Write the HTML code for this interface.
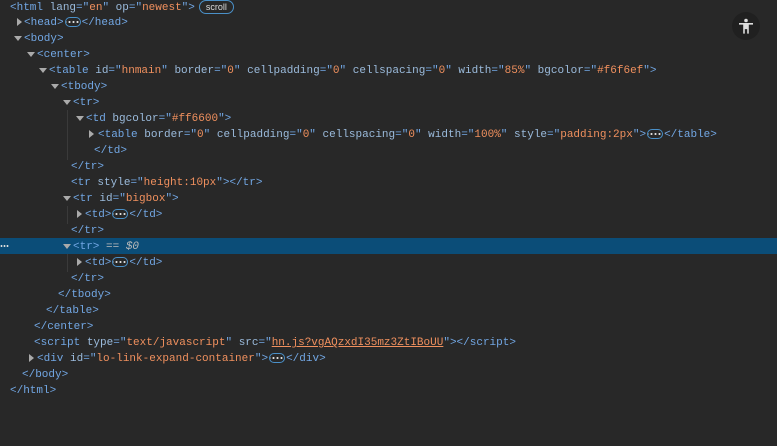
<!DOCTYPE html><html><head><style>
body{margin:0;width:777px;height:446px;background:#282828;font-family:"Liberation Mono",monospace;font-size:11px;color:#d6d6d6;overflow:hidden;position:relative}
.r{position:absolute;left:0;width:777px;height:16px;line-height:18px;white-space:pre}
.sel{background:#0b4d78}
.t{color:#72a7e4}.a{color:#9bbbdc}.v{color:#f0905e}.u{color:#f0905e;text-decoration:underline}
.ar{position:absolute;width:0;height:0}
.dn{border-left:4px solid transparent;border-right:4px solid transparent;border-top:5px solid #aaa;margin-top:6px}
.rt{border-top:4px solid transparent;border-bottom:4px solid transparent;border-left:5px solid #aaa;margin-top:4px}
.el{display:inline-block;border:1px solid #4a90c8;border-radius:7px;height:10px;width:16px;vertical-align:middle;margin:0 1px;box-sizing:border-box;background:radial-gradient(circle,#ddd 0.9px,transparent 1.2px) 1.5px 0/4px 8px repeat-x}
.sc{display:inline-block;border:1px solid #4a90c8;border-radius:8px;height:12px;line-height:12px;padding:0 6px;font-size:9px;color:#ddd;vertical-align:middle;font-family:"Liberation Sans",sans-serif;margin-left:4px}
.ln{position:absolute;width:1px;background:#3a3a3a}
</style></head><body>
<div class="ln" style="left:67px;top:110px;height:50px"></div>
<div class="ln" style="left:67px;top:206px;height:18px"></div>
<div class="ln" style="left:67px;top:254px;height:18px"></div>
<div class="r" style="top:-1px"><span style="position:absolute;left:10px"><span class="t">&lt;html</span> <span class="a">lang</span><span class="t">="</span><span class="v">en</span><span class="t">"</span> <span class="a">op</span><span class="t">="</span><span class="v">newest</span><span class="t">"&gt;</span><span class="sc">scroll</span></span></div>
<div class="r" style="top:14px"><i class="ar rt" style="left:17px"></i><span style="position:absolute;left:24px"><span class="t">&lt;head&gt;</span><span class="el"></span><span class="t">&lt;/head&gt;</span></span></div>
<div class="r" style="top:30px"><i class="ar dn" style="left:14px"></i><span style="position:absolute;left:24px" class="t">&lt;body&gt;</span></div>
<div class="r" style="top:46px"><i class="ar dn" style="left:27px"></i><span style="position:absolute;left:37px" class="t">&lt;center&gt;</span></div>
<div class="r" style="top:62px"><i class="ar dn" style="left:39px"></i><span style="position:absolute;left:49px"><span class="t">&lt;table</span> <span class="a">id</span><span class="t">="</span><span class="v">hnmain</span><span class="t">"</span> <span class="a">border</span><span class="t">="</span><span class="v">0</span><span class="t">"</span> <span class="a">cellpadding</span><span class="t">="</span><span class="v">0</span><span class="t">"</span> <span class="a">cellspacing</span><span class="t">="</span><span class="v">0</span><span class="t">"</span> <span class="a">width</span><span class="t">="</span><span class="v">85%</span><span class="t">"</span> <span class="a">bgcolor</span><span class="t">="</span><span class="v">#f6f6ef</span><span class="t">"&gt;</span></span></div>
<div class="r" style="top:78px"><i class="ar dn" style="left:51px"></i><span style="position:absolute;left:61px" class="t">&lt;tbody&gt;</span></div>
<div class="r" style="top:94px"><i class="ar dn" style="left:63px"></i><span style="position:absolute;left:73px" class="t">&lt;tr&gt;</span></div>
<div class="r" style="top:110px"><i class="ar dn" style="left:76px"></i><span style="position:absolute;left:86px"><span class="t">&lt;td</span> <span class="a">bgcolor</span><span class="t">="</span><span class="v">#ff6600</span><span class="t">"&gt;</span></span></div>
<div class="r" style="top:126px"><i class="ar rt" style="left:89px"></i><span style="position:absolute;left:98px"><span class="t">&lt;table</span> <span class="a">border</span><span class="t">="</span><span class="v">0</span><span class="t">"</span> <span class="a">cellpadding</span><span class="t">="</span><span class="v">0</span><span class="t">"</span> <span class="a">cellspacing</span><span class="t">="</span><span class="v">0</span><span class="t">"</span> <span class="a">width</span><span class="t">="</span><span class="v">100%</span><span class="t">"</span> <span class="a">style</span><span class="t">="</span><span class="v">padding:2px</span><span class="t">"&gt;</span><span class="el"></span><span class="t">&lt;/table&gt;</span></span></div>
<div class="r" style="top:142px"><span style="position:absolute;left:94px" class="t">&lt;/td&gt;</span></div>
<div class="r" style="top:158px"><span style="position:absolute;left:71px" class="t">&lt;/tr&gt;</span></div>
<div class="r" style="top:174px"><span style="position:absolute;left:71px"><span class="t">&lt;tr</span> <span class="a">style</span><span class="t">="</span><span class="v">height:10px</span><span class="t">"&gt;&lt;/tr&gt;</span></span></div>
<div class="r" style="top:190px"><i class="ar dn" style="left:63px"></i><span style="position:absolute;left:73px"><span class="t">&lt;tr</span> <span class="a">id</span><span class="t">="</span><span class="v">bigbox</span><span class="t">"&gt;</span></span></div>
<div class="r" style="top:206px"><i class="ar rt" style="left:77px"></i><span style="position:absolute;left:85px"><span class="t">&lt;td&gt;</span><span class="el"></span><span class="t">&lt;/td&gt;</span></span></div>
<div class="r" style="top:222px"><span style="position:absolute;left:71px" class="t">&lt;/tr&gt;</span></div>
<div class="r sel" style="top:238px"><span style="position:absolute;left:0;top:7px;width:9px;height:2px;background:radial-gradient(circle,#ddd 0.8px,transparent 1.1px) 0 0/3px 2px repeat-x"></span><i class="ar dn" style="left:63px"></i><span style="position:absolute;left:73px"><span class="t">&lt;tr&gt;</span> <span style="color:#bbb">== <i>$0</i></span></span></div>
<div class="r" style="top:254px"><i class="ar rt" style="left:77px"></i><span style="position:absolute;left:85px"><span class="t">&lt;td&gt;</span><span class="el"></span><span class="t">&lt;/td&gt;</span></span></div>
<div class="r" style="top:270px"><span style="position:absolute;left:71px" class="t">&lt;/tr&gt;</span></div>
<div class="r" style="top:286px"><span style="position:absolute;left:58px" class="t">&lt;/tbody&gt;</span></div>
<div class="r" style="top:302px"><span style="position:absolute;left:46px" class="t">&lt;/table&gt;</span></div>
<div class="r" style="top:318px"><span style="position:absolute;left:34px" class="t">&lt;/center&gt;</span></div>
<div class="r" style="top:334px"><span style="position:absolute;left:34px"><span class="t">&lt;script</span> <span class="a">type</span><span class="t">="</span><span class="v">text/javascript</span><span class="t">"</span> <span class="a">src</span><span class="t">="</span><span class="u">hn.js?vgAQzxdI35mz3ZtIBoUU</span><span class="t">"&gt;&lt;/script&gt;</span></span></div>
<div class="r" style="top:350px"><i class="ar rt" style="left:29px"></i><span style="position:absolute;left:37px"><span class="t">&lt;div</span> <span class="a">id</span><span class="t">="</span><span class="v">lo-link-expand-container</span><span class="t">"&gt;</span><span class="el"></span><span class="t">&lt;/div&gt;</span></span></div>
<div class="r" style="top:366px"><span style="position:absolute;left:22px" class="t">&lt;/body&gt;</span></div>
<div class="r" style="top:382px"><span style="position:absolute;left:10px" class="t">&lt;/html&gt;</span></div>
<div style="position:absolute;left:732px;top:12px;width:28px;height:28px;border-radius:50%;background:#202020">
<svg width="28" height="28" viewBox="0 0 28 28"><circle cx="14" cy="8.5" r="1.8" fill="#ddd"/><path d="M7 11h14v1.6h-4.2v9h-1.6v-4.5h-2.4v4.5h-1.6v-9H7z" fill="#ddd"/></svg></div>
</body></html>
